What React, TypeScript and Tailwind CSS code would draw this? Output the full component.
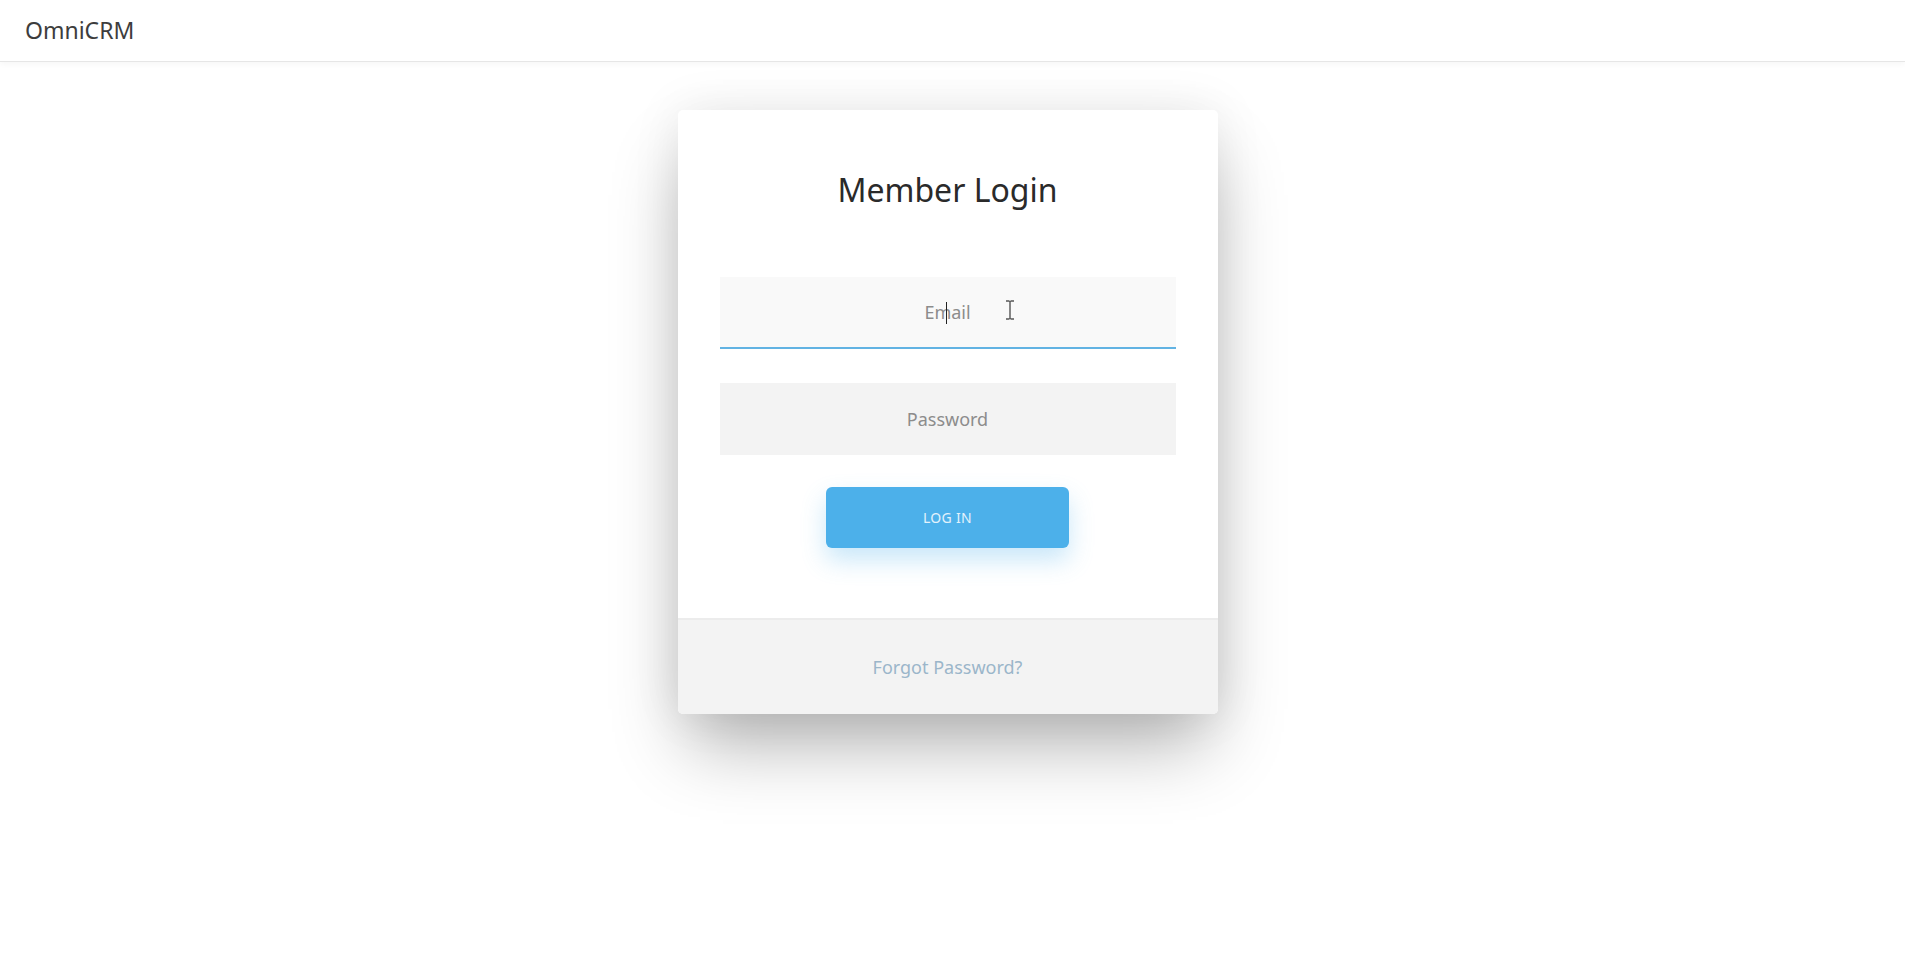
import { useState } from 'react';

export default function App() {
    const [email, setEmail] = useState('');
    const [password, setPassword] = useState('');

    return (
        <div className="min-h-screen bg-white font-['Noto_Sans','Open_Sans',sans-serif] text-[#333]">
            {/* Barra superior */}
            <header className="h-[62px] flex items-center px-[25px] border-b border-[#e6e6e6] shadow-[0_2px_6px_rgba(0,0,0,0.04)]">
                <span className="text-[23px] text-[#3d3d3d]">OmniCRM</span>
            </header>

            {/* Tarjeta de login */}
            <main className="flex justify-center pt-[48px] pr-[10px]">
                <div className="w-[540px] rounded-[5px] bg-white overflow-hidden shadow-[0_40px_70px_-10px_rgba(0,0,0,0.3),0_0_50px_rgba(0,0,0,0.08)]">
                    <div className="px-[42px] pt-[60px] pb-[70px] flex flex-col items-center">
                        <h1 className="text-[32px] leading-[40px] text-[#2a2a2a] mb-[67px]">Member Login</h1>

                        <div className="relative w-full h-[72px] bg-[#f9f9f9] border-b-2 border-[#62b3e3]">
                            <input
                                value={email}
                                onChange={(e) => setEmail(e.target.value)}
                                placeholder="Email"
                                className="w-full h-full bg-transparent text-center text-[18px] text-[#555] placeholder:text-[#8c8c8c] outline-none"
                            />
                            {/* caret */}
                            <span className="absolute left-[226px] top-[25px] w-px h-[22px] bg-[#222]" />
                            {/* cursor I-beam */}
                            <svg className="absolute left-[285px] top-[23px]" width="10" height="20" viewBox="0 0 10 20">
                                <path d="M1 1h3.5M5.5 1H9M5 1v18M1 19h3.5M5.5 19H9" stroke="#555" strokeWidth="1.4" fill="none" />
                            </svg>
                        </div>

                        <div className="w-full h-[72px] mt-[34px] bg-[#f3f3f3]">
                            <input
                                type="password"
                                value={password}
                                onChange={(e) => setPassword(e.target.value)}
                                placeholder="Password"
                                className="w-full h-full bg-transparent text-center text-[18px] text-[#555] placeholder:text-[#8c8c8c] outline-none"
                            />
                        </div>

                        <button className="mt-[32px] w-[243px] h-[61px] rounded-[6px] bg-[#4cb0ea] text-[14px] text-[#e3f2fc] tracking-[0.3px] shadow-[0_12px_24px_rgba(76,176,234,0.3)]">
                            LOG IN
                        </button>
                    </div>

                    <div className="h-[96px] flex items-center justify-center bg-[#f3f3f3] border-t-2 border-[#ececec]">
                        <a href="#" className="text-[18px] text-[#9bb6ca]">Forgot Password?</a>
                    </div>
                </div>
            </main>
        </div>
    );
}
